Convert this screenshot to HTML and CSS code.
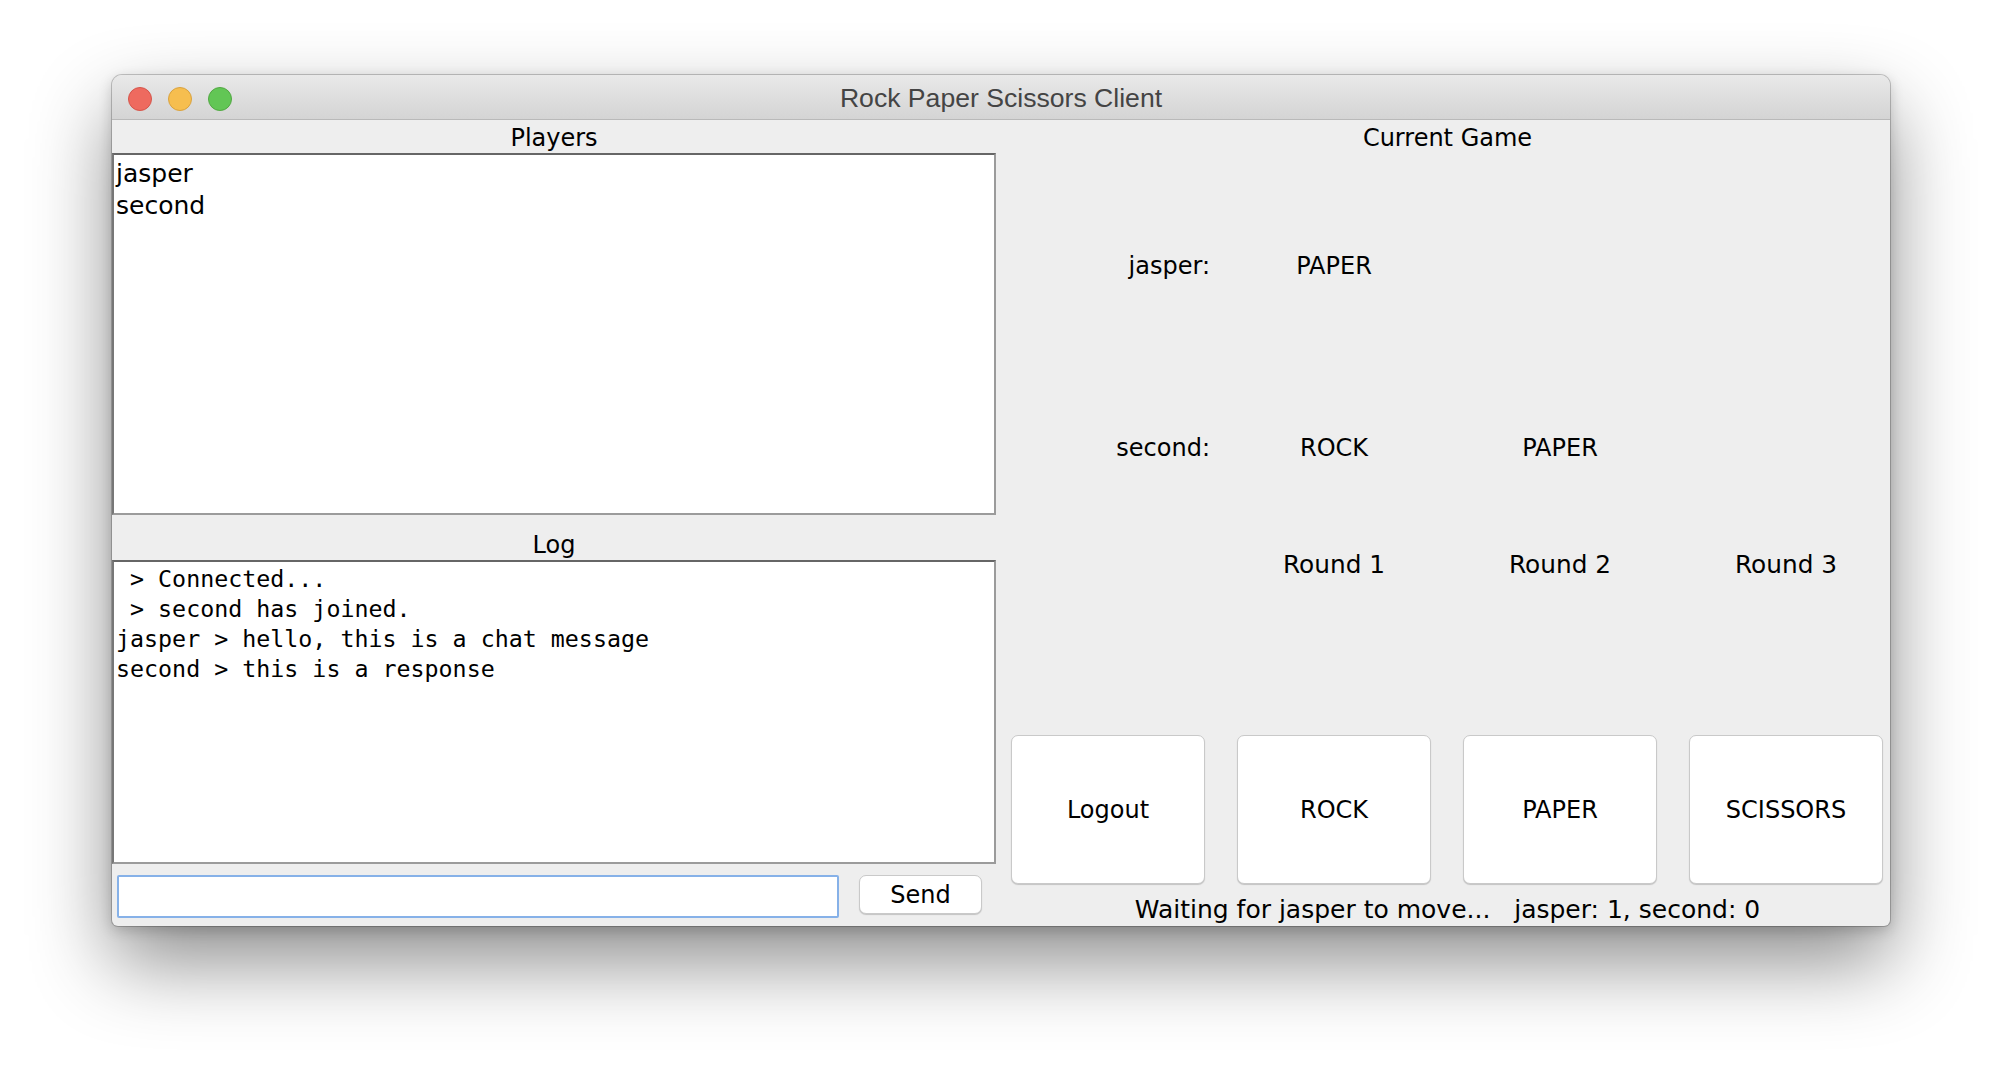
FILE: index.html
```html
<!DOCTYPE html>
<html>
<head>
<meta charset="utf-8">
<title>Rock Paper Scissors Client</title>
<link rel="stylesheet" href="styles.css">
</head>
<body>
<div class="window">
  <div class="titlebar">
    <div class="lights">
      <span class="light red"></span>
      <span class="light yellow"></span>
      <span class="light green"></span>
    </div>
    <div class="title">Rock Paper Scissors Client</div>
  </div>
  <div class="content">
    <div class="left">
      <div class="section-label">Players</div>
      <div class="box players">
        <div class="player">jasper</div>
        <div class="player">second</div>
      </div>
      <div class="section-label log-label">Log</div>
      <div class="box log"><div class="log-line"> &gt; Connected...</div><div class="log-line"> &gt; second has joined.</div><div class="log-line">jasper &gt; hello, this is a chat message</div><div class="log-line">second &gt; this is a response</div></div>
      <div class="chat-row">
        <div class="chat-input"></div>
        <div class="btn send">Send</div>
      </div>
    </div>
    <div class="right">
      <div class="section-label">Current Game</div>
      <div class="game">
        <div class="cell name">jasper:</div>
        <div class="cell">PAPER</div>
        <div class="cell"></div>
        <div class="cell"></div>

        <div class="cell name">second:</div>
        <div class="cell">ROCK</div>
        <div class="cell">PAPER</div>
        <div class="cell"></div>

        <div class="cell"></div>
        <div class="cell round">Round 1</div>
        <div class="cell round">Round 2</div>
        <div class="cell round">Round 3</div>

        <div class="spacer"></div>

        <div class="btn move">Logout</div>
        <div class="btn move">ROCK</div>
        <div class="btn move">PAPER</div>
        <div class="btn move">SCISSORS</div>
      </div>
      <div class="status">Waiting for jasper to move...   jasper: 1, second: 0</div>
    </div>
  </div>
</div>
</body>
</html>
```
FILE: styles.css
```css
* { box-sizing: border-box; }

html, body {
  margin: 0;
  padding: 0;
  background: #ffffff;
  min-height: 100%;
}

body {
  font-family: "DejaVu Sans", "Lucida Grande", sans-serif;
  font-size: 24px;
  color: #000;
  padding-top: 75px;
  padding-bottom: 148px;
}

.window {
  margin: 0 0 0 112px;
  width: 1778px;
  height: 851px;
  border-radius: 10px 10px 6px 6px;
  background: #eeeeee;
  box-shadow: 0 0 0 1px rgba(0,0,0,0.2), 0 4px 14px rgba(0,0,0,0.18), 0 36px 80px rgba(0,0,0,0.45);
  overflow: hidden;
  display: flex;
  flex-direction: column;
}

.titlebar {
  position: relative;
  height: 45px;
  flex: none;
  background: linear-gradient(#e9e9e9, #d4d4d4);
  border-bottom: 1px solid #b9b9b9;
  display: flex;
  align-items: center;
  justify-content: center;
}

.lights {
  position: absolute;
  left: 16px;
  top: 12px;
  display: flex;
  gap: 16px;
}

.light {
  width: 24px;
  height: 24px;
  border-radius: 50%;
  display: block;
}
.light.red { background: #ee6a5f; border: 1px solid #d5554b; }
.light.yellow { background: #f6be4f; border: 1px solid #d9a23f; }
.light.green { background: #62c655; border: 1px solid #52a843; }

.title {
  font-family: "Liberation Sans", "Helvetica Neue", Arial, sans-serif;
  font-size: 26.6px;
  color: #444;
  line-height: 45px;
  padding-top: 3px;
}

.content {
  flex: 1;
  display: flex;
}

.left {
  width: 884px;
  flex: none;
  display: flex;
  flex-direction: column;
}

.section-label {
  height: 33px;
  line-height: 33px;
  padding-top: 2px;
  text-align: center;
  flex: none;
}

.log-label {
  margin-top: 12px;
}

.box {
  background: #fff;
  border-top: 2px solid #666;
  border-left: 2px solid #777;
  border-right: 2px solid #9b9b9b;
  border-bottom: 2px solid #9b9b9b;
  flex: none;
}

.players {
  height: 362px;
  padding: 3px 2px 0;
}

.player {
  line-height: 32px;
  font-size: 25px;
}

.log {
  height: 304px;
  padding: 2px 2px 0;
  font-family: "DejaVu Sans Mono", monospace;
  font-size: 23.3px;
}

.log-line {
  line-height: 30px;
  white-space: pre;
}

.chat-row {
  display: flex;
  align-items: flex-start;
  padding: 11px 14px 0 5px;
  gap: 20px;
}

.chat-input {
  width: 722px;
  height: 43px;
  background: #fff;
  border: 2px solid #86b1e8;
  border-radius: 2px;
}

.btn {
  background: #fff;
  border: 1px solid #c9c9c9;
  border-radius: 7px;
  box-shadow: 0 1px 1px rgba(0,0,0,0.18);
  display: flex;
  align-items: center;
  justify-content: center;
}

.send {
  width: 123px;
  height: 39px;
}

.right {
  flex: 1;
  display: flex;
  flex-direction: column;
  padding: 0 6px 0 15px;
}

.game {
  flex: 1;
  display: grid;
  grid-template-columns: repeat(4, 194px);
  grid-template-rows: 222px 142px 92px 126px 149px;
  column-gap: 32px;
}

.cell {
  display: flex;
  align-items: center;
  justify-content: center;
  padding-top: 3px;
}

.cell.round {
  font-size: 24.8px;
}

.cell.name {
  justify-content: flex-end;
  margin-right: -5px;
}

.spacer {
  grid-column: 1 / -1;
}

.move {
  height: 149px;
}

.status {
  height: 42px;
  padding-top: 8px;
  line-height: 36px;
  text-align: center;
  white-space: pre;
  font-size: 25px;
}
```
